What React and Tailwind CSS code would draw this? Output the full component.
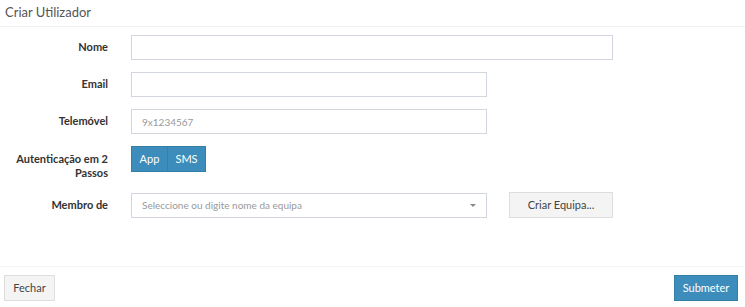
export default function App() {
  const font = { fontFamily: '"Source Sans Pro", Lato, "Open Sans", sans-serif' };
  return (
    <div className="w-[745px] h-[307px] bg-white text-[#333] flex flex-col" style={font}>
      <div className="h-[27px] border-b border-[#f0f0f0] px-[5px] flex items-center">
        <span className="text-[13px] text-[#555]">Criar Utilizador</span>
      </div>
      <div className="flex-1 flex flex-col pt-[8px] gap-[12px]">
        <div className="flex items-center">
          <label className="w-[108px] text-right text-[11px] font-bold">Nome</label>
          <input className="ml-[23px] w-[482px] h-[25px] border border-[#d2d6de] px-[10px] text-[10px] outline-none" />
        </div>
        <div className="flex items-center">
          <label className="w-[108px] text-right text-[11px] font-bold">Email</label>
          <input className="ml-[23px] w-[356px] h-[25px] border border-[#d2d6de] px-[10px] text-[10px] outline-none" />
        </div>
        <div className="flex items-center">
          <label className="w-[108px] text-right text-[11px] font-bold">Telemóvel</label>
          <input placeholder="9x1234567" className="ml-[23px] w-[356px] h-[25px] border border-[#d2d6de] px-[10px] text-[10px] outline-none placeholder:text-[#999]" />
        </div>
        <div className="flex items-start">
          <label className="w-[108px] text-right text-[11px] font-bold leading-[14px] pt-[6px]">Autenticação em 2 Passos</label>
          <div className="ml-[23px] flex">
            <button className="h-[26px] w-[37px] bg-[#3c8dbc] border border-[#367fa9] text-white text-[11px]">App</button>
            <button className="h-[26px] w-[38px] bg-[#3c8dbc] border border-[#367fa9] border-l-0 text-white text-[11px]">SMS</button>
          </div>
        </div>
        <div className="flex items-center">
          <label className="w-[108px] text-right text-[11px] font-bold">Membro de</label>
          <div className="ml-[23px] w-[356px] h-[25px] border border-[#d2d6de] px-[10px] flex items-center justify-between">
            <span className="text-[10px] text-[#999]">Seleccione ou digite nome da equipa</span>
            <span className="w-0 h-0 border-l-[3px] border-r-[3px] border-t-[3px] border-l-transparent border-r-transparent border-t-[#888]" />
          </div>
          <button className="ml-[22px] w-[104px] h-[26px] bg-[#f4f4f4] border border-[#ddd] text-[11px] text-[#444]">Criar Equipa...</button>
        </div>
      </div>
      <div className="h-[41px] border-t border-[#f4f4f4] flex items-start justify-between px-[4px] pt-[8px]">
        <button className="w-[51px] h-[26px] bg-[#f4f4f4] border border-[#ddd] text-[11px] text-[#444]">Fechar</button>
        <button className="w-[64px] h-[26px] bg-[#3c8dbc] border border-[#367fa9] text-[11px] text-white mr-[3px]">Submeter</button>
      </div>
    </div>
  );
}
